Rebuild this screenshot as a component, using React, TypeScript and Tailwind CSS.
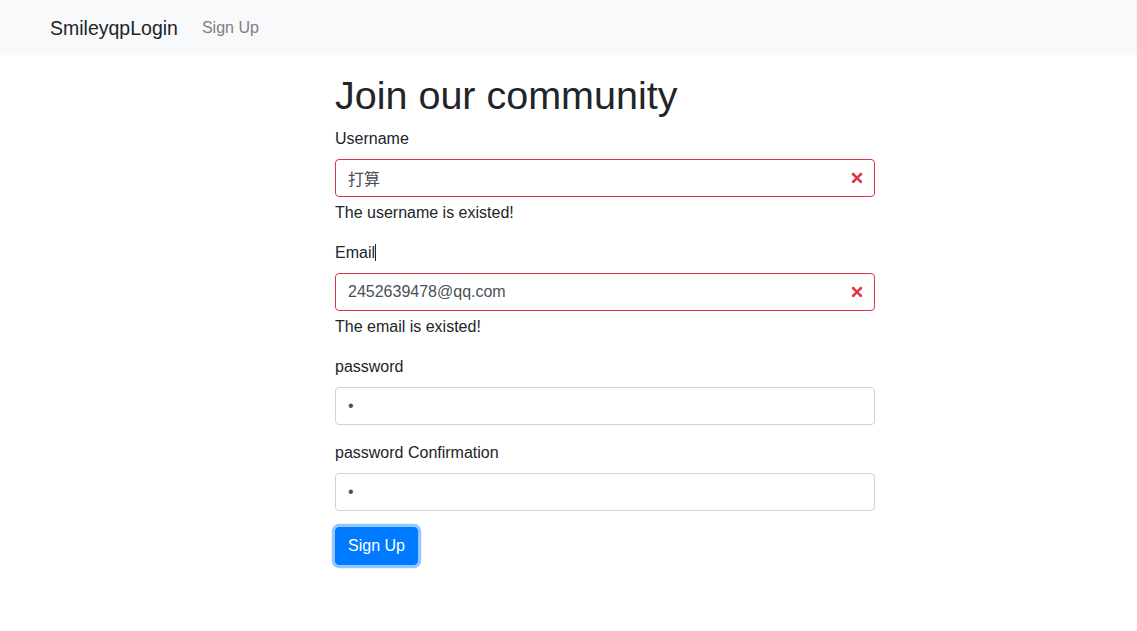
import React from 'react';

const font = { fontFamily: '"Liberation Sans", "Noto Sans CJK SC", sans-serif' };

function InvalidIcon() {
  return (
    <svg className="absolute right-[9px] top-1/2 -translate-y-1/2 w-[18px] h-[18px]" viewBox="-2 -2 7 7" fill="#dc3545">
      <path stroke="#dc3545" d="M0 0l3 3m0-3L0 3" />
      <circle r=".5" />
      <circle cx="3" r=".5" />
      <circle cy="3" r=".5" />
      <circle cx="3" cy="3" r=".5" />
    </svg>
  );
}

function Field({
  label,
  value,
  type = 'text',
  error,
  caret,
}: {
  label: string;
  value: string;
  type?: string;
  error?: string;
  caret?: boolean;
}) {
  return (
    <div className="mb-4">
      <label className="block mb-2 leading-6 text-[#212529]">
        {label}
        {caret && <span className="inline-block w-px h-[17px] bg-[#212529] align-[-3px]" />}
      </label>
      <div className="relative">
        <input
          type={type}
          defaultValue={value}
          readOnly
          style={font}
          className={`block w-full h-[38px] px-3 py-[6px] text-base leading-6 text-[#495057] bg-white border rounded outline-none ${
            error ? 'border-[#dc3545] pr-[36px]' : 'border-[#ced4da]'
          }`}
        />
        {error && <InvalidIcon />}
      </div>
      {error && <div className="mt-1 leading-6 text-[#212529]">{error}</div>}
    </div>
  );
}

export default function App() {
  return (
    <div className="min-h-screen bg-white text-base text-[#212529]" style={font}>
      {/* Navbar */}
      <nav className="h-[55px] bg-[#f8f9fa] flex items-center px-[50px]">
        <a href="#" className="text-[19.5px] leading-[30px] mr-4 text-[#212529]">
          SmileyqpLogin
        </a>
        <a href="#" className="px-2 leading-6 text-[#808080]">
          Sign Up
        </a>
      </nav>

      {/* Form */}
      <main className="ml-[335px] w-[540px] pt-4">
        <h1 className="text-[39.5px] leading-[48px] mb-2 text-[#212529]">Join our community</h1>
        <form>
          <Field label="Username" value="打算" error="The username is existed!" />
          <Field label="Email" value="2452639478@qq.com" error="The email is existed!" caret />
          <Field label="password" value="a" type="password" />
          <Field label="password Confirmation" value="a" type="password" />
          <button
            type="button"
            className="px-3 py-[6px] leading-6 text-white bg-[#007bff] border border-[#007bff] rounded shadow-[0_0_0_3.2px_rgba(38,143,255,0.5)]"
          >
            Sign Up
          </button>
        </form>
      </main>
    </div>
  );
}
